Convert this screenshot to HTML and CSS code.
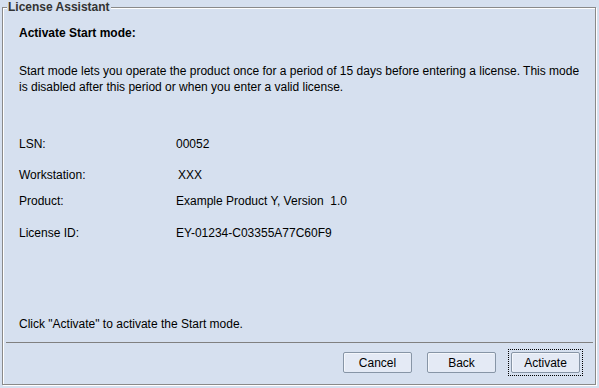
FILE: index.html
```html
<!DOCTYPE html>
<html>
<head>
<meta charset="utf-8">
<link rel="stylesheet" href="styles.css">
</head>
<body>
<fieldset class="panel">
  <legend class="panel-title">License Assistant</legend>
  <div class="content">
    <h1 class="heading">Activate Start mode:</h1>
    <p class="intro">Start mode lets you operate the product once for a period of 15 days before entering a license. This mode is disabled after this period or when you enter a valid license.</p>
    <div class="info">
      <div class="label">LSN:</div><div class="value">00052</div>
      <div class="label">Workstation:</div><div class="value ws">XXX</div>
      <div class="label">Product:</div><div class="value">Example Product Y, Version&nbsp; 1.0</div>
      <div class="label">License ID:</div><div class="value">EY-01234-C03355A77C60F9</div>
    </div>
    <div class="spacer"></div>
    <p class="hint">Click "Activate" to activate the Start mode.</p>
  </div>
  <div class="separator"></div>
  <div class="buttons">
    <button class="btn">Cancel</button>
    <button class="btn">Back</button>
    <button class="btn focused">Activate</button>
  </div>
</fieldset>
</body>
</html>
```
FILE: styles.css
```css
html, body {
  margin: 0;
  padding: 0;
  height: 100%;
  background: #d6e0ef;
}
body {
  font-family: "Liberation Sans", Arial, sans-serif;
  font-size: 12px;
  color: #000;
  overflow: hidden;
}
.panel {
  box-sizing: border-box;
  height: 385px;
  margin: 0 3px 0 2px;
  padding: 11px 15px 11px 16px;
  border: 1px solid #8a8a8a;
  box-shadow: 1px 1px 0 #fff, inset 1px 1px 0 #fff;
  display: flex;
  flex-direction: column;
  min-width: 0;
}
.panel-title {
  font-weight: bold;
  font-size: 12px;
  color: #333;
  padding: 0 1px;
  margin-left: -12px;
  line-height: 15px;
  background: #d6e0ef;
}
.content {
  flex: 1;
  display: flex;
  flex-direction: column;
  margin-right: -10px;
}
.heading {
  margin: 0;
  font-size: 12px;
  font-weight: bold;
  line-height: 14px;
}
.intro {
  margin: 23px 0 0;
  line-height: 16px;
}
.info {
  margin-top: 42px;
  display: grid;
  grid-template-columns: 157px 1fr;
  grid-template-rows: 31px 26px 32px 16px;
  line-height: 14px;
}
.value.ws {
  padding-left: 2px;
}
.spacer {
  flex: 1;
}
.hint {
  margin: 0;
  line-height: 14px;
}
.separator {
  height: 1px;
  background: #808080;
  margin: 11px -13px 0 -13px;
}
.buttons {
  display: flex;
  justify-content: flex-end;
  gap: 15px;
  margin-top: 9px;
}
.btn {
  position: relative;
  box-sizing: border-box;
  width: 69px;
  height: 21px;
  padding: 0;
  font-family: "Liberation Sans", Arial, sans-serif;
  font-size: 12px;
  color: #000;
  background: #e4eaf5;
  border: 1px solid #8795a6;
  border-radius: 2px;
  box-shadow: inset 1px 1px 0 #f3f6fb;
}
.btn.focused::after {
  content: "";
  position: absolute;
  inset: -4px;
  border: 1px dotted #000;
}
```
